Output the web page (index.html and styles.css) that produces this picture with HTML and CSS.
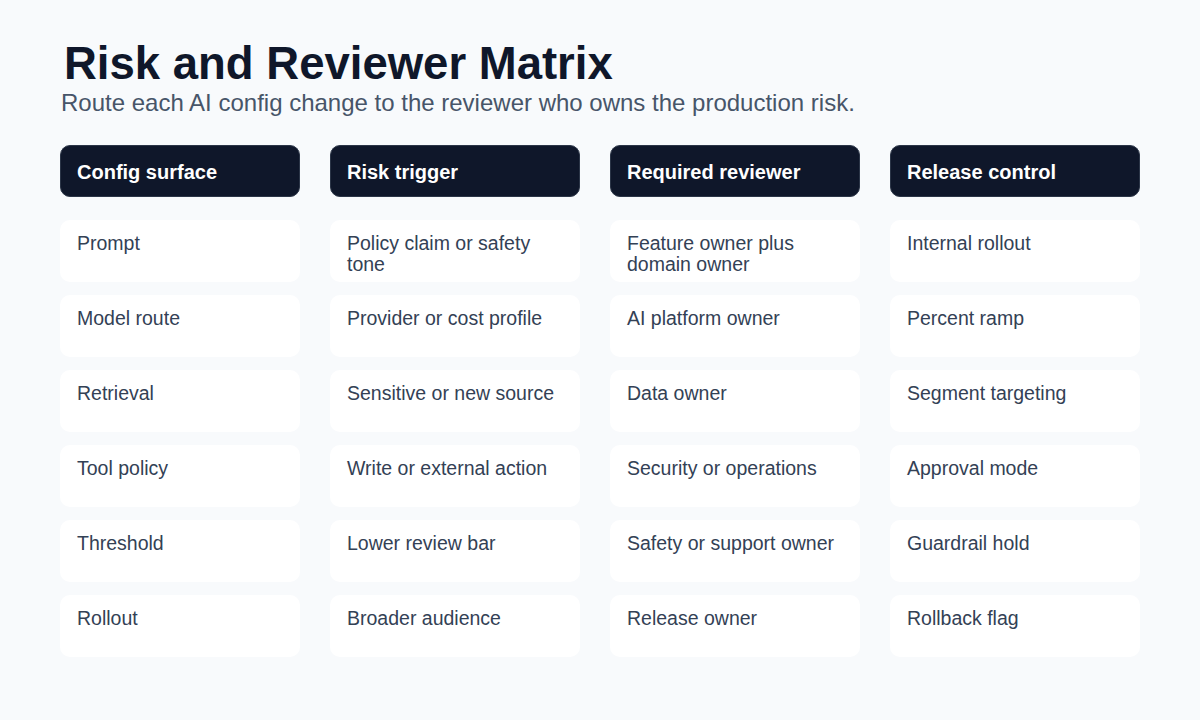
FILE: index.html
```html
<!DOCTYPE html>
<html lang="en">
<head>
<meta charset="utf-8">
<title>Risk and Reviewer Matrix</title>
<link rel="stylesheet" href="styles.css">
</head>
<body>
<main class="page">
  <h1 class="title">Risk and Reviewer Matrix</h1>
  <p class="subtitle">Route each AI config change to the reviewer who owns the production risk.</p>
  <div class="matrix">
    <div class="head">Config surface</div>
    <div class="head">Risk trigger</div>
    <div class="head">Required reviewer</div>
    <div class="head">Release control</div>

    <div class="cell">Prompt</div>
    <div class="cell">Policy claim or safety tone</div>
    <div class="cell">Feature owner plus domain owner</div>
    <div class="cell">Internal rollout</div>

    <div class="cell">Model route</div>
    <div class="cell">Provider or cost profile</div>
    <div class="cell">AI platform owner</div>
    <div class="cell">Percent ramp</div>

    <div class="cell">Retrieval</div>
    <div class="cell">Sensitive or new source</div>
    <div class="cell">Data owner</div>
    <div class="cell">Segment targeting</div>

    <div class="cell">Tool policy</div>
    <div class="cell">Write or external action</div>
    <div class="cell">Security or operations</div>
    <div class="cell">Approval mode</div>

    <div class="cell">Threshold</div>
    <div class="cell">Lower review bar</div>
    <div class="cell">Safety or support owner</div>
    <div class="cell">Guardrail hold</div>

    <div class="cell">Rollout</div>
    <div class="cell">Broader audience</div>
    <div class="cell">Release owner</div>
    <div class="cell">Rollback flag</div>
  </div>
</main>
</body>
</html>
```
FILE: styles.css
```css
* { box-sizing: border-box; }

html, body {
  margin: 0;
  padding: 0;
  background: #f8fafc;
}

body {
  font-family: "Liberation Sans", Arial, sans-serif;
  width: 1200px;
  height: 720px;
  overflow: hidden;
}

.page {
  padding: 41px 60px 0;
}

.title {
  margin: 0 0 0 4px;
  font-size: 45.5px;
  line-height: 45px;
  font-weight: 700;
  color: #0f172a;
}

.subtitle {
  margin: 2px 0 0 1px;
  font-size: 24px;
  line-height: 29px;
  color: #475569;
}

.matrix {
  margin-top: 28px;
  display: grid;
  grid-template-columns: 240px 250px 250px 250px;
  column-gap: 30px;
  row-gap: 13px;
}

.head {
  height: 52px;
  margin-bottom: 10px;
  display: flex;
  align-items: center;
  padding: 2px 16px 0;
  background: #0f172a;
  border: 1px solid #2b3547;
  border-radius: 10px;
  color: #ffffff;
  font-size: 20px;
  font-weight: 700;
}

.cell {
  height: 62px;
  padding: 13px 17px 0;
  background: #ffffff;
  border-radius: 10px;
  color: #334155;
  font-size: 19.5px;
  line-height: 21px;
}
```
